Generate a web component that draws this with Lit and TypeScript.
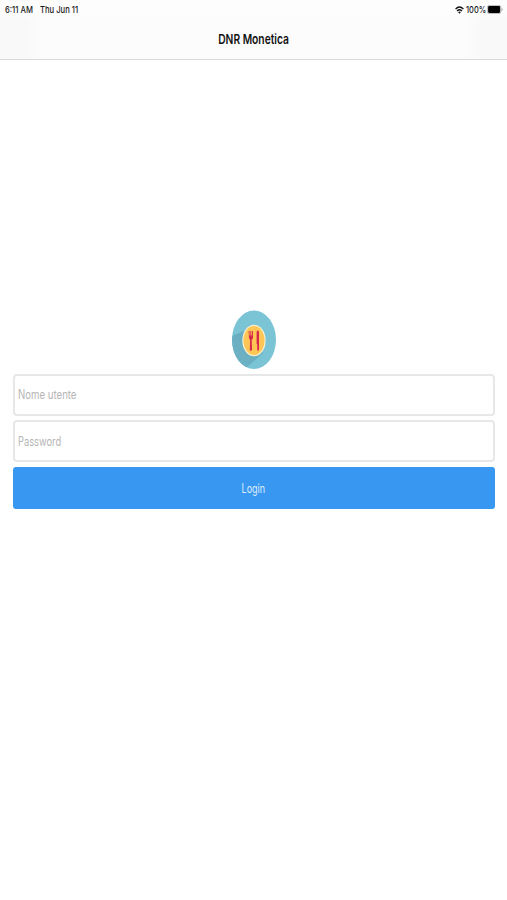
import { LitElement, html, css } from "lit";
import { customElement } from "lit/decorators.js";

@customElement("app-root")
export class AppRoot extends LitElement {
  static styles = css`
    :host {
      display: flex;
      flex-direction: column;
      height: 900px;
      background: #fff;
      font-family: Inter, "Liberation Sans", sans-serif;
      color: #1a1a1a;
    }
    svg { display: block; }
    .top {
      box-sizing: border-box;
      height: 60px;
      background: linear-gradient(90deg, #f9f9f9 0, #f9f9f9 24px, #fcfcfc 44px, #fcfcfc 462px, #f9f9f9 482px);
      border-bottom: 1px solid #d9d9d9;
    }
    .status {
      display: flex;
      align-items: center;
      height: 19px;
      padding: 0 4px 0 5px;
      background: linear-gradient(#fdfdfd 60%, transparent);
      font-size: 9.3px;
      font-weight: 500;
      line-height: 19px;
    }
    /* Condensed lettering: glyphs are scaled horizontally inside each box. */
    .fit { white-space: nowrap; }
    .fit span { display: inline-block; transform-origin: 0 50%; }
    .time { width: 35px; }
    .time span { transform: scaleX(0.82); }
    .date { flex: 1; }
    .date span { transform: scaleX(0.82); }
    .wifi { margin-right: 2px; }
    .pct { width: 21.5px; }
    .pct span { transform: scaleX(0.8); }
    .title {
      padding-left: 1px;
      text-align: center;
      font-size: 13.5px;
      font-weight: 600;
      line-height: 40px;
      color: #111;
    }
    .title span, .login span { transform-origin: 50% 50%; }
    .title span { transform: scaleX(0.76); }
    .form {
      display: flex;
      flex-direction: column;
      padding: 250px 12.5px 0 13px;
    }
    .logo { align-self: center; margin-bottom: 4px; }
    .field {
      box-sizing: border-box;
      height: 42px;
      margin-bottom: 4px;
      padding-left: 3px;
      border: 2px solid #e7e7e7;
      border-radius: 4px;
      color: #b5b5b5;
      font-size: 12.5px;
      line-height: 37px;
    }
    .field span { transform: scaleX(0.77); }
    .password { margin-bottom: 5px; line-height: 39px; }
    .password span { transform: scaleX(0.745); }
    .login {
      height: 42px;
      border: 0;
      padding: 1px 0 0;
      border-radius: 3px;
      background: #3897f0;
      color: #dcecfc;
      font: 12.5px/41px Inter, "Liberation Sans", sans-serif;
    }
    .login span { transform: scaleX(0.72); }
  `;

  render() {
    return html`
      <header class="top">
        <div class="status">
          <div class="fit time"><span>6:11 AM</span></div>
          <div class="fit date"><span>Thu Jun 11</span></div>
          <svg class="wifi" width="9" height="8" viewBox="0 0 9 8" fill="none" stroke="#111" stroke-width="1.4">
            <path d="M.6 3Q4.5-.8 8.4 3M2.1 4.9Q4.5 2.6 6.9 4.9" />
            <path d="M3.1 6.1Q4.5 4.9 5.9 6.1L4.5 7.8z" fill="#111" stroke="none" />
          </svg>
          <div class="fit pct"><span>100%</span></div>
          <svg width="16" height="9" viewBox="0 0 16 9">
            <rect x=".4" y=".4" width="13.4" height="8.2" rx="1.8" fill="#fff" stroke="#999" stroke-width=".7" />
            <rect x="1.1" y="1.1" width="12" height="6.8" rx="1.1" fill="#000" />
            <path d="M14.6 3v3q.9-.5.9-1.5T14.6 3z" fill="#888" />
          </svg>
        </div>
        <div class="fit title"><span>DNR Monetica</span></div>
      </header>
      <main class="form">
        <svg class="logo" width="44" height="60" viewBox="0 0 44 60">
          <defs>
            <clipPath id="disc"><ellipse cx="22" cy="29.7" rx="22" ry="29.3" /></clipPath>
            <linearGradient id="shade" x1="1" y1="0" x2="0" y2="1">
              <stop offset="0" stop-color="#67a9bb" />
              <stop offset="1" stop-color="#6db4c7" />
            </linearGradient>
          </defs>
          <ellipse cx="22" cy="29.7" rx="22" ry="29.3" fill="#7ac4d5" />
          <path d="M14 20L0 26V60H12L31 43z" fill="url(#shade)" clip-path="url(#disc)" />
          <ellipse cx="22" cy="30.5" rx="11.7" ry="15.8" fill="#f5efcf" />
          <ellipse cx="22" cy="30.5" rx="10.5" ry="14.4" fill="#ffc656" />
          <g fill="#d6294b">
            <path d="M16.6 21h.9v4.5h.8V21h1v4.5h.8V21h.9v6.2q0 2-1.3 2.6l.3 9.5q0 1.5-1.1 1.5t-1.1-1.5l.3-9.5q-1.2-.6-1.2-2.6z" />
            <path d="M24.6 22.2q0-1.7 1.2-1.7t1.2 1.7v17q0 1.5-.9 1.5t-.9-1.5V34h-.6z" />
          </g>
        </svg>
        <div class="fit field"><span>Nome utente</span></div>
        <div class="fit field password"><span>Password</span></div>
        <button class="fit login"><span>Login</span></button>
      </main>
    `;
  }
}
